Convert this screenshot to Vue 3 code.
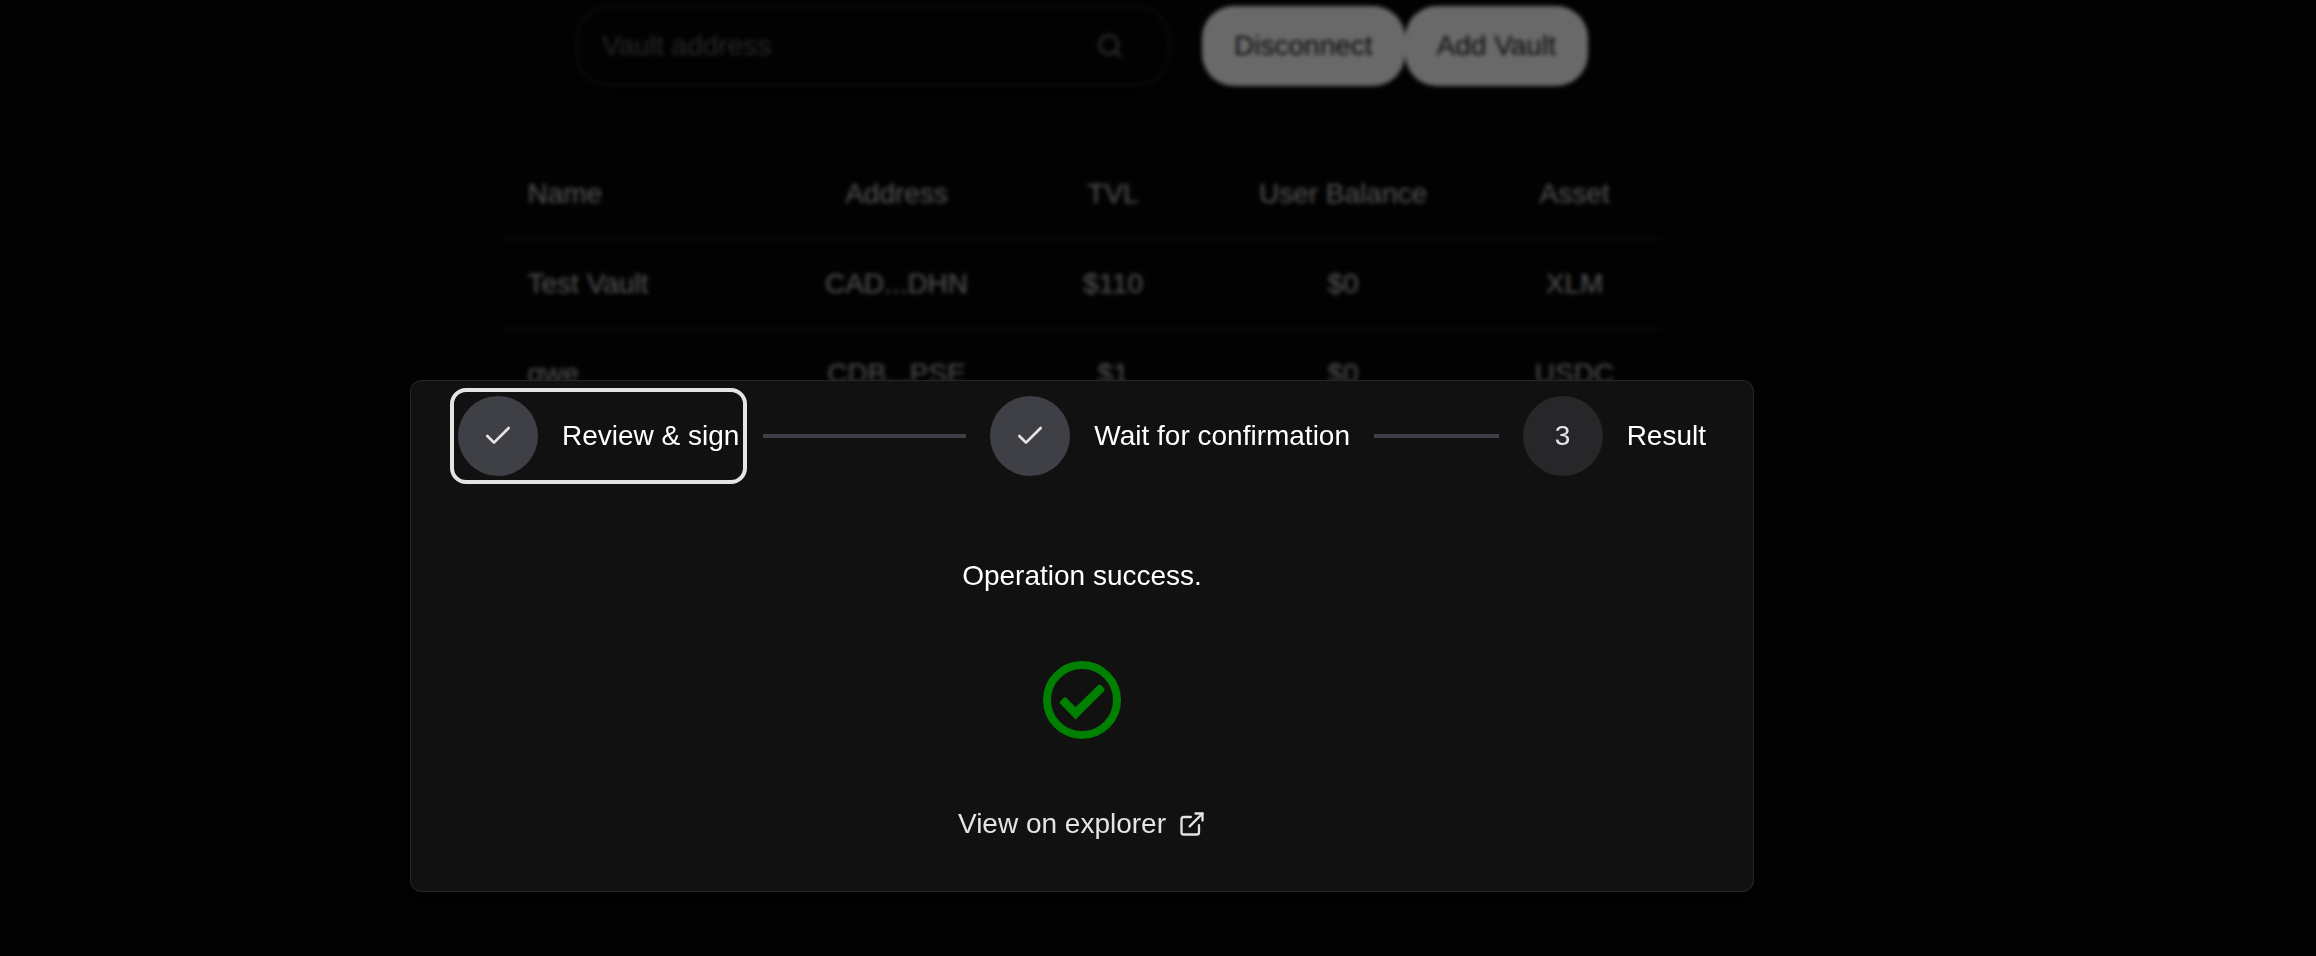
<script setup>
import { ref } from 'vue'

const query = ref('')

const columns = ['Name', 'Address', 'TVL', 'User Balance', 'Asset']

const vaults = [
  { name: 'Test Vault', address: 'CAD...DHN', tvl: '$110', balance: '$0', asset: 'XLM' },
  { name: 'qwe', address: 'CDB...PSE', tvl: '$1', balance: '$0', asset: 'USDC' },
]

const steps = [
  { label: 'Review & sign', done: true, focused: true },
  { label: 'Wait for confirmation', done: true, focused: false },
  { label: 'Result', done: false, focused: false },
]
</script>

<template>
  <div class="screen">
    <main class="page">
      <div class="toolbar">
        <div class="search">
          <input v-model="query" type="text" placeholder="Vault address" aria-label="Vault address" />
          <svg class="search-icon" viewBox="0 0 24 24" aria-hidden="true">
            <circle cx="11" cy="11" r="8" />
            <path d="m21 21-4.3-4.3" />
          </svg>
        </div>
        <div class="actions">
          <button type="button" class="pill">Disconnect</button>
          <button type="button" class="pill">Add Vault</button>
        </div>
      </div>

      <table class="vaults">
        <colgroup>
          <col class="col-name" />
          <col class="col-address" />
          <col class="col-tvl" />
          <col class="col-balance" />
          <col class="col-asset" />
        </colgroup>
        <thead>
          <tr>
            <th v-for="column in columns" :key="column" scope="col">{{ column }}</th>
          </tr>
        </thead>
        <tbody>
          <tr v-for="vault in vaults" :key="vault.name">
            <td>{{ vault.name }}</td>
            <td>{{ vault.address }}</td>
            <td>{{ vault.tvl }}</td>
            <td>{{ vault.balance }}</td>
            <td>{{ vault.asset }}</td>
          </tr>
        </tbody>
      </table>
    </main>

    <div class="backdrop">
      <section class="dialog" role="dialog" aria-modal="true" aria-label="Transaction">
        <ol class="steps">
          <li v-for="(step, index) in steps" :key="step.label" class="step">
            <button type="button" class="step-trigger" :class="{ focused: step.focused }">
              <span class="indicator" :class="{ done: step.done }">
                <svg v-if="step.done" class="tick" viewBox="0 0 24 24" aria-hidden="true">
                  <path d="M20 6 9 17l-5-5" />
                </svg>
                <template v-else>{{ index + 1 }}</template>
              </span>
              <span>{{ step.label }}</span>
            </button>
            <span v-if="index < steps.length - 1" class="separator"></span>
          </li>
        </ol>

        <div class="result">
          <p class="message">Operation success.</p>
          <svg class="success" viewBox="0 0 96 96" aria-hidden="true">
            <circle cx="48" cy="48" r="35" fill="none" stroke="currentColor" stroke-width="8" />
            <path
              fill="currentColor"
              d="M25.3 50.7 29.4 46Q31 44.4 32.6 46L41.6 55.2 63.7 33.5Q65.6 31.8 67.5 33.5L69.8 35.9Q71.5 37.7 69.8 39.5L41.6 67.4Z"
            />
          </svg>
          <a href="#" class="explorer">
            View on explorer
            <svg class="external" viewBox="0 0 24 24" aria-hidden="true">
              <path d="M18 13v6a2 2 0 0 1-2 2H5a2 2 0 0 1-2-2V8a2 2 0 0 1 2-2h6" />
              <path d="M15 3h6v6" />
              <path d="M10 14 21 3" />
            </svg>
          </a>
        </div>
      </section>
    </div>
  </div>
</template>

<style>
body {
  margin: 0;
  background: #060606;
}
</style>

<style scoped>
.screen {
  min-height: 100vh;
  box-sizing: border-box;
  padding-right: 152px;
  background: #060606;
  color: #ededed;
  font-family: "Liberation Sans", Arial, Helvetica, sans-serif;
  font-size: 28px;
  line-height: 40px;
}

.page {
  display: flex;
  flex-direction: column;
  align-items: center;
  gap: 64px;
  padding-top: 6px;
}

.toolbar {
  display: flex;
  gap: 32px;
}

.search {
  display: flex;
  align-items: center;
  box-sizing: border-box;
  width: 594px;
  height: 80px;
  padding: 0 44px 0 24px;
  border: 2px solid #232326;
  border-radius: 32px;
  background: #060606;
  box-shadow: 0 4px 16px rgba(0, 0, 0, 0.6);
}

.search input {
  flex: 1;
  min-width: 0;
  padding: 0;
  border: 0;
  outline: 0;
  background: transparent;
  color: inherit;
  font: inherit;
}

.search input::placeholder {
  color: #5e5e64;
  opacity: 1;
}

.search-icon {
  width: 28px;
  height: 28px;
  fill: none;
  stroke: #7c7c80;
  stroke-width: 2;
  stroke-linecap: round;
}

.actions {
  display: flex;
}

.pill {
  height: 80px;
  padding: 0 32px;
  border: 0;
  border-radius: 32px;
  background: #ffffff;
  color: #1c1c1f;
  font: inherit;
}

.vaults {
  width: 100%;
  max-width: 1157px;
  table-layout: fixed;
  border-collapse: separate;
  border-spacing: 0;
}

.col-name {
  width: 261px;
}

.col-address {
  width: 264px;
}

.col-tvl {
  width: 169px;
}

.col-balance {
  width: 291px;
}

.col-asset {
  width: 172px;
}

.vaults th,
.vaults td {
  padding: 24px 0;
  border-bottom: 2px solid #1e1e1e;
  color: #c8c8c8;
  font-weight: 400;
  text-align: center;
}

.vaults th:first-child,
.vaults td:first-child {
  padding-left: 24px;
  text-align: left;
}

.backdrop {
  position: fixed;
  inset: 0;
  display: flex;
  align-items: flex-start;
  justify-content: center;
  padding: 380px 152px 0 0;
  background: rgba(0, 0, 0, 0.59);
  backdrop-filter: blur(2px);
}

.dialog {
  box-sizing: border-box;
  width: 100%;
  max-width: 1344px;
  padding: 16px 48px 48px;
  border-radius: 12px;
  background: #111111;
  box-shadow: inset 0 0 0 1px #262626, 0 8px 24px rgba(0, 0, 0, 0.6);
}

.steps {
  display: flex;
  gap: 24px;
  margin: 0;
  padding: 0;
  list-style: none;
}

.step {
  display: flex;
  flex: 1 0 0;
  align-items: center;
  gap: 24px;
}

.step:last-child {
  flex: none;
}

.step-trigger {
  display: flex;
  align-items: center;
  gap: 24px;
  padding: 0;
  border: 0;
  border-radius: 8px;
  background: transparent;
  color: #ffffff;
  font: inherit;
  white-space: nowrap;
}

.step-trigger.focused {
  outline: 4px solid #e4e4e4;
  outline-offset: 4px;
}

.indicator {
  display: flex;
  align-items: center;
  justify-content: center;
  width: 80px;
  height: 80px;
  border-radius: 50%;
  background: #27272a;
  color: #e4e4e7;
}

.indicator.done {
  background: #3f3f46;
}

.tick {
  width: 32px;
  height: 32px;
  fill: none;
  stroke: currentColor;
  stroke-width: 2;
  stroke-linecap: round;
  stroke-linejoin: round;
}

.separator {
  flex: 1;
  height: 4px;
  background: #3f3f46;
}

.result {
  display: flex;
  flex-direction: column;
  align-items: center;
  gap: 56px;
  padding-top: 80px;
}

.message {
  margin: 0;
  color: #ffffff;
}

.success {
  width: 96px;
  height: 96px;
  color: #008000;
}

.explorer {
  display: flex;
  align-items: center;
  gap: 12px;
  color: #e4e4e4;
  text-decoration: none;
}

.external {
  width: 28px;
  height: 28px;
  fill: none;
  stroke: currentColor;
  stroke-width: 2;
  stroke-linecap: round;
  stroke-linejoin: round;
}
</style>
